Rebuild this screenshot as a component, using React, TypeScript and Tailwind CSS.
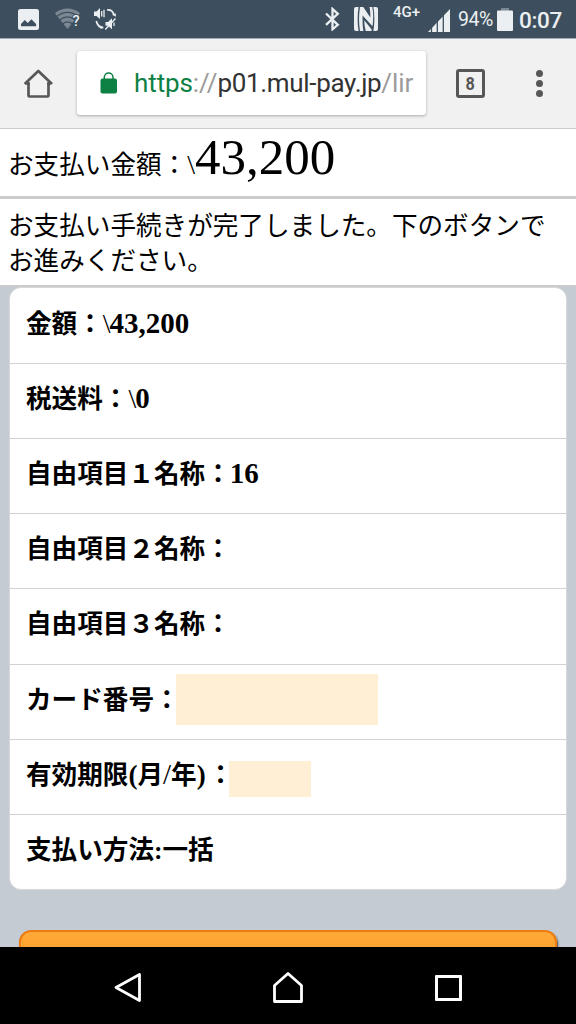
import React from "react";

interface PaymentRow {
  label: React.ReactNode;
  yen?: boolean;
  value?: string;
  mask?: string;
}

const rows: PaymentRow[] = [
  { label: "金額：", yen: true, value: "43,200" },
  { label: "税送料：", yen: true, value: "0" },
  { label: "自由項目１名称：", value: "16" },
  { label: "自由項目２名称：" },
  { label: "自由項目３名称：" },
  { label: "カード番号：", mask: "top-[9px] left-[166px] h-[51px] w-[202px]" },
  {
    label: <>有効期限<span className="text-[27px] leading-none">(</span>月<span className="font-normal text-[29px] leading-none">/</span>年<span className="mr-[2px] text-[27px] leading-none">)</span>：</>,
    mask: "top-[21px] left-[219px] h-[36px] w-[82px]",
  },
  { label: "支払い方法:一括" },
];

const StatusBar: React.FC = () => (
  <div className="flex h-[38px] shrink-0 items-center bg-[#3d4f5e] text-[#eceff1] font-['Roboto',sans-serif]">
    <svg className="ml-[18px] shrink-0" width="21" height="21" viewBox="0 0 21 21">
      <rect width="21" height="21" rx="2.5" fill="#eceff1" />
      <path d="M3 17.200V15l3.800-4 3 3 3.600-3.800 4.700 4.800v2.200z" fill="#3d4f5e" />
    </svg>
    {/* wifi */}
    <svg className="ml-[16px] shrink-0" width="26" height="22" viewBox="0 0 26 22">
      <path d="M0 5.200C7.500-1 17.500-1 25 5.200L12.500 21z" fill="#7b8792" />
      <g fill="none" stroke="#3d4f5e" strokeWidth="1.200">
        <path d="M2 8.400c6.500-5.300 14.500-5.300 21 0M4.700 12c5-4 10.600-4 15.600 0M7.800 15.700c3-2.400 6.400-2.400 9.400 0" />
      </g>
      <text x="17.500" y="18" fontSize="14.500" fontWeight="500" fill="#eceff1" stroke="#3d4f5e" strokeWidth="2" paintOrder="stroke">?</text>
    </svg>
    {/* sound / mute toggle */}
    <svg className="ml-[13px] shrink-0" width="23" height="24" viewBox="0 0 23 24" fill="none" stroke="#eceff1">
      <path d="M0 4.500h2.500L6 1v11L2.500 9H0z" fill="#eceff1" stroke="none" />
      <path d="M7.700 4v5.500M10 2.800v7.500" strokeWidth="1.300" />
      <path d="M13 3c3.500-.5 6 1.400 7 5M2.300 14c.8 4 3.500 6.400 7 6.600" strokeWidth="1.700" />
      <path d="M18 7.800l4 2-.3-3.600zM6.300 18.500l3.200 2-3 1.500z" fill="#eceff1" stroke="none" />
      <path d="M11.500 15h2.500l4-3.700v11l-4-3.600h-2.500z" fill="#eceff1" stroke="none" />
      <path d="M11.300 22.500L21.500 11.500M20 15.500v3.500" strokeWidth="1.300" />
    </svg>

    {/* bluetooth */}
    <svg className="ml-[208px] shrink-0" width="15" height="24" viewBox="0 0 15 24" fill="none" stroke="#eceff1" strokeWidth="2.300">
      <path d="M1 6.500l11.800 11.300-5.300 4.500V2L12.800 6.800 1 17.800" />
    </svg>
    {/* nfc */}
    <svg className="ml-[13px] shrink-0" width="26" height="26" viewBox="0 0 26 26" fill="#eceff1">
      <path d="M3 1h2.600c-1.300 7.500-1.300 16.500 0 24H3a2 2 0 0 1-2-2V3a2 2 0 0 1 2-2z" />
      <path d="M23 1h-2.600c1.300 7.500 1.300 16.500 0 24H23a2 2 0 0 0 2-2V3a2 2 0 0 0-2-2z" />
      <path d="M7 1h3.300l7 10.500c.2-3.700-.1-7-.8-10.500h2.800c1.200 6 1.200 13 .2 19.200L9.600 9.500c-.2 5.500 0 10.500.8 15.500H7C5.700 17 5.700 9 7 1z" />
      <path d="M11.200 14.200l7.500 9.300-.3 1.500h-5.700c-.9-3.500-1.400-7-1.500-10.800z" />
    </svg>
    <span className="ml-[14px] -mt-[13px] w-[28px] text-[15px] leading-none font-medium">4G+</span>
    {/* signal */}
    <svg className="ml-[7px] mt-[2px] shrink-0" width="22" height="23" viewBox="0 0 22 23" fill="#eceff1">
      <path d="M0 23L22 0v23z" />
      <path d="M3.500 17v6M9.300 10v13M15.300 4v19" stroke="#3d4f5e" strokeWidth="1.300" />
    </svg>
    <span className="ml-[8px] mt-[2px] w-[35px] text-[19.500px] leading-none whitespace-nowrap tracking-[-0.500px]">94%</span>
    <svg className="ml-[4px] shrink-0" width="16" height="23" viewBox="0 0 16 23">
      <rect x="4" width="8" height="3" fill="#7b8792" />
      <rect y="2.500" width="16" height="20.500" rx="1" fill="#eceff1" />
    </svg>
    <span className="ml-[6px] mt-[2px] text-[22.500px] leading-none font-medium tracking-[-0.300px]">0:07</span>
  </div>
);

const BrowserBar: React.FC = () => (
  <div className="flex h-[91px] shrink-0 items-center border-t border-b border-t-[#a5adb8] border-b-[#cbcbcb] bg-[#f1f1f1] font-['Roboto',sans-serif]">
    <svg className="ml-[24px] shrink-0" width="29" height="29" viewBox="0 0 29 29" fill="none" stroke="#575757" strokeWidth="2.700" strokeLinejoin="round">
      <path d="M4.500 14.500V26.500a1 1 0 0 0 1 1h18a1 1 0 0 0 1-1V14.500" />
      <path d="M.7 15L14.300 2 28 15M2 14.500h4M23 14.500h4" />
    </svg>
    <div className="-mt-px ml-[24px] flex h-[64px] w-[349px] items-center rounded-[3px] bg-white shadow-[0_1px_3px_rgba(0,0,0,0.3)]">
      <svg className="ml-[23px] shrink-0" width="18" height="22" viewBox="0 0 18 22">
        <path d="M4.300 8V5.300a4.300 4.300 0 0 1 8.700 0V8" fill="none" stroke="#0d8043" strokeWidth="1.500" />
        <rect x=".5" y="6.500" width="16.500" height="15" rx="2" fill="#0d8043" />
      </svg>
      <div className="ml-[16px] text-[26px] leading-[34px] tracking-[-0.100px] whitespace-nowrap text-[#333]">
        <span className="text-[#0d8043]">https</span>
        <span className="text-[#9b9b9b]">://</span><span className="tracking-[-0.330px]">p01.mul-pay.jp</span><span className="text-[#9b9b9b]">/lir</span>
      </div>
    </div>
    <div className="ml-[30px] flex h-[29px] w-[29px] items-center justify-center rounded-[3px] border-[3px] border-[#575757] text-[18px] leading-none font-bold text-[#575757]">
      <span className="scale-x-90">8</span>
    </div>
    <div className="ml-[51px] flex flex-col gap-[3px]">
      <i className="size-[7px] rounded-full bg-[#575757]" />
      <i className="size-[7px] rounded-full bg-[#575757]" />
      <i className="size-[7px] rounded-full bg-[#575757]" />
    </div>
  </div>
);

const NavBar: React.FC = () => (
  <div className="flex h-[77px] shrink-0 items-center bg-black">
    <svg className="mt-[5px] ml-[113px]" width="29" height="32" viewBox="0 0 29 32" fill="none" stroke="#fff" strokeWidth="2.800" strokeLinejoin="round">
      <path d="M26.500 2.500v26L3 15.500z" />
    </svg>
    <svg className="mt-[4px] ml-[130px]" width="32" height="34" viewBox="0 0 32 34" fill="none" stroke="#fff" strokeWidth="2.800" strokeLinejoin="round">
      <path d="M2.500 30.500V14.500L16 2.500l13.500 12v16z" />
    </svg>
    <div className="mt-[5px] ml-[131px] h-[26px] w-[27px] rounded-[1px] border-[3px] border-white" />
  </div>
);

const App: React.FC = () => {
  return (
    <div className="flex h-[1024px] w-[576px] flex-col overflow-hidden bg-[#c5cbd3] text-black">
      <StatusBar />
      <BrowserBar />

      <div className="flex min-h-0 flex-1 flex-col overflow-hidden font-['Liberation_Serif','Noto_Sans_CJK_JP',serif] text-[25.600px]">
        {/* total amount */}
        <div className="flex h-[70px] shrink-0 items-baseline border-b-[3px] border-[#cbcbcb] bg-white pt-[3px] pl-[8px] leading-[68px] whitespace-nowrap">
          <span>お支払い金額：</span>
          <span className="text-[28px] leading-none">\</span>
          <span className="text-[51px] leading-none">43,200</span>
        </div>
        <div className="h-[88px] shrink-0 border-b-2 border-[#cbcbcb] bg-white pt-[10px] pl-[8px] leading-[35px]">
          お支払い手続きが完了しました。下のボタンで<br />お進みください。
        </div>

        <div className="mx-[9px] h-[603px] shrink-0 overflow-hidden rounded-[12px] border border-[#d8d8d8] bg-white pt-[0.600px] font-bold">
          {rows.map((row, i) => (
            <div key={i} className="relative flex h-[75.200px] items-baseline border-b border-[#d2d2d2] pl-[16px] leading-[71px] whitespace-nowrap last:border-b-0">
              <span>{row.label}</span>
              {row.yen && <span className="text-[28px] leading-none font-normal">\</span>}
              {row.value && <span className="-ml-px text-[29px] leading-none">{row.value}</span>}
              {row.mask && <span className={`absolute bg-[#fff0d5] ${row.mask}`} />}
            </div>
          ))}
        </div>

        <div className="mx-[19px] mt-[40px] h-[60px] shrink-0 rounded-[12px] border-2 border-[#ef7c10] bg-linear-to-b from-[#ffa938] to-[#ff9410] shadow-[1px_2px_2px_#444]" />
      </div>

      <NavBar />
    </div>
  );
};

export default App;
